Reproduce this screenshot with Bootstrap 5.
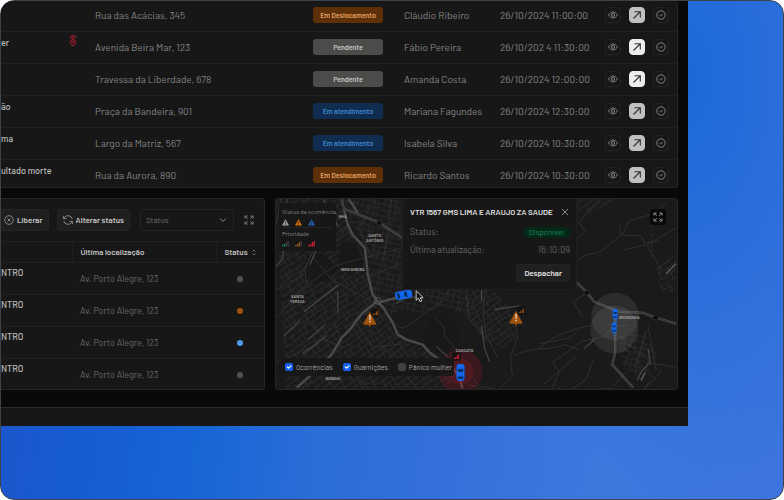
<!DOCTYPE html>
<html lang="pt-BR" data-bs-theme="dark">
<head>
<meta charset="utf-8">
<meta name="viewport" content="width=device-width, initial-scale=1">
<title>Central de ocorrências</title>
<link href="https://cdn.jsdelivr.net/npm/bootstrap@5.3.0/dist/css/bootstrap.min.css" rel="stylesheet">
<style>
:root{--panel:#171717;--line:#202020;--edge:#262626;--muted:#858585;--dim:#686868}
html{background:#fff}
body{background:#fff;min-height:100vh;font-family:Barlow,Roboto,"Liberation Sans",sans-serif;font-size:10px;line-height:16px;color:var(--muted)}
.stage{min-height:100vh;border:1px solid #3d434b;border-radius:14px;padding-right:95px;
background:radial-gradient(ellipse 230px 420px at 87% 15%,#1c68d9 0,#1c68d900 100%),linear-gradient(96deg,#1f54ca 0,#165bd1 14%,#1865d6 29%,#2a6dd7 43%,#326fd9 56%,#3d78dd 78%,#3b74dc 100%)}
.app{background:#090909;border-top-left-radius:13px}
.panel{background:var(--panel);border:1px solid var(--edge);border-left:0;border-radius:0 3px 3px 0}
.inset{margin-right:10px}
.calls{border-top:0}
.grid{width:100%;table-layout:fixed;border-collapse:collapse}
.grid td,.grid th{padding:0;vertical-align:top;white-space:nowrap}
.grid tr+tr td{border-top:1px solid var(--line)}
.calls td{height:32px;padding-top:7px}
.calls tr:first-child td{height:30px;padding-top:6px}
.calls tr:last-child td{height:28px}
.calls td.title{padding-top:3px;color:#bcbcbc;font-weight:500;font-size:9px}
.calls td.pin{padding-top:3px;padding-left:1px}
.tag{display:block;width:70px;height:16px;border-radius:3px;font-size:7px;font-weight:600;text-align:center}
.moving{background:#5e3007;color:#e5a468}
.waiting{background:#4c4c4b;color:#c4c4c4}
.serving{background:#0e2d50;color:#4285ce}
.act{width:16px;height:16px;padding:0;border:1px solid #242424;border-radius:4px;background:#171717;color:#8c8c8c;display:grid;place-items:center}
.act.go{background:#bfbfbf;border-color:#bfbfbf;color:#333}
.act.go.on{background:#ededed;border-color:#ededed}
svg{display:block;fill:none;stroke:currentColor}
.lower{margin-top:10px}
.left{flex:0 0 264px;min-width:0}
.tool{height:42px}
.tbtn{height:22px;padding:0 5px;background:#1f1f1f;border:1px solid #242424;border-radius:3px;color:#c8c8c8;font-size:8px;font-weight:600;line-height:16px;white-space:nowrap;display:flex;align-items:center;gap:3px}
.tbtn svg{color:#888}
.first{padding-left:3px;border-left:0;border-radius:0 3px 3px 0;margin-right:8px}
.pick{width:94px;height:22px;margin-left:10px;padding:0 20px 0 5px;font-size:8px;line-height:16px;color:#707070;background-color:#171717;border:1px solid #242424;border-radius:3px;background-image:url("data:image/svg+xml,%3Csvg xmlns='http://www.w3.org/2000/svg' viewBox='0 0 8 8'%3E%3Cpath d='M1 2.5 4 5.5 7 2.5' fill='none' stroke='%23888'/%3E%3C/svg%3E");background-size:8px;background-position:right 6px center}
.plain{border:0;background:none;padding:0;color:#858585}
.wide{margin-right:10px}
.units{font-size:9px;color:var(--dim)}
.units th{height:20px;font-size:8px;line-height:20px;color:#c2c2c2;font-weight:600;border-top:1px solid var(--line);border-left:1px solid var(--line);padding-left:8px}
.units th:first-child{border-left:0}
.units td{height:32px;padding:8px 8px 0;border-top:1px solid var(--line)}
.units td.title{padding:2px 0 0;color:#bcbcbc;font-weight:500}
.units tr:last-child td{height:30px}
.dot{display:block;width:6px;height:6px;border-radius:50%;margin:5px 0 0 13px;background:#555}
.dot.warn{background:#9f540e}.dot.info{background:#4e9ced}
.map{border-left:1px solid var(--edge);border-radius:3px;background:#1a1a1a;min-width:0}
.city{position:absolute;inset:0;width:100%;height:100%}
.city text{font-family:Roboto,"Liberation Sans",sans-serif;font-size:4px;font-weight:700;fill:#9a9a9a;stroke:none;text-anchor:middle}
.over{position:absolute}
.legend{left:3px;top:4px;width:57px;background:#171717;border-radius:3px;font-size:6px;line-height:11px;padding:3px;white-space:nowrap}
.legend .marks{height:9px;gap:6px;align-items:center}
.legend .cut{border-bottom:1px solid #252525;height:11px}
.filters{left:3px;bottom:13px;height:18px;padding:0 2px 0 6px;background:#171717e8;border-radius:3px;gap:10px;font-size:7px;line-height:16px;color:#a8a8a8}
.filters>span{gap:3px}
.filters label{white-space:nowrap}
.filters .form-check-input{width:8px;height:8px;margin:0;border-radius:2px;background-color:#414141;border:0}
.filters .form-check-input:checked{background-color:#155ff0}
.popup{left:126px;top:0;width:175px;background:#171717;border:1px solid #202020;border-top:0;border-radius:0 0 3px 3px;padding:5px 6px 7px 7px;font-size:9px;color:var(--dim)}
.popup h2{font-size:8px;line-height:16px;font-weight:600;color:#e2e2e2;margin:0;white-space:nowrap}
.when{margin:2px 0 6px}
.live{background:#062818;color:#17885a;font-size:8px;line-height:11px;padding:0 6px;border-radius:5px}
.send{background:#202020;border:1px solid #232323;border-radius:3px;color:#e0e0e0;font-size:8px;font-weight:600;line-height:16px;padding:0 7px}
.expand{right:11px;top:10px;width:16px;height:16px;padding:0;background:#090909;border:0;border-radius:3px;color:#999;display:grid;place-items:center}
.foot{height:19px;background:#171717;border-top:1px solid #2b2b2b;margin-top:17px}
</style>
<script src="https://cdn.jsdelivr.net/npm/bootstrap@5.3.0/dist/js/bootstrap.bundle.min.js"></script>
</head>
<body>
<svg width="0" height="0" class="position-absolute" aria-hidden="true">
<defs>
<symbol id="eye" viewBox="0 0 10 10"><path d="M.5 5C2 2.800 3.400 2 5 2s3 .8 4.500 3C8 7.200 6.600 8 5 8S2 7.200.5 5Z" stroke-width=".9"/><circle cx="5" cy="5" r="1.500" stroke-width=".9"/></symbol>
<symbol id="arrow" viewBox="0 0 10 10"><path d="M1.500 8.500 8 2M2.500 1.800h5.800v5.800" stroke-width="1.100"/></symbol>
<symbol id="check" viewBox="0 0 10 10"><circle cx="5" cy="5" r="4.200" stroke-width=".9"/><path d="m3.600 5.200 1 1 1.900-2.200" stroke-width=".9"/></symbol>
<symbol id="full" viewBox="0 0 10 10"><path d="M1 3.600V1h2.600M1 1l2.800 2.800M6.400 1H9v2.600M9 1 6.200 3.800M9 6.400V9H6.400M9 9 6.200 6.200M3.600 9H1V6.400M1 9l2.800-2.800" stroke-width=".9"/></symbol>
<symbol id="tri" viewBox="0 0 8 8"><path d="M4 .8 7.500 7h-7Z" fill="currentColor" stroke-linejoin="round" stroke-width=".8"/><path d="M4 3v2M4 5.700v.7" stroke="#171717" stroke-width=".8"/></symbol>
<symbol id="bars" viewBox="0 0 8 8"><path d="M1 7.500V5.500M3 7.500v-3M5 7.500v-5M7 7.500V1" stroke-width="1.300"/></symbol>
<symbol id="car" viewBox="0 0 10 18"><rect x="1" y=".5" width="8" height="17" rx="2.500" fill="#1266ed" stroke="none"/><path d="M2 5.500h6l-1 3H3ZM2.500 13h5l.5 2.500H2Z" fill="#06305f" stroke="none"/><path d="M.5 4v2M9.500 4v2M.5 12v2M9.500 12v2" stroke="#0d4aa8"/></symbol>
<pattern id="blocks" width="25" height="22" patternUnits="userSpaceOnUse" patternTransform="rotate(-34)"><path d="M0 3 25 1M0 8l13-1 12 2M0 14h25M0 19l14-1 11 2M4 0v14M9 8v14M14 0v18M20 0l-1 9M21 14v8" stroke="#2d2d2d" stroke-width=".9"/></pattern>
<pattern id="blocks2" width="21" height="24" patternUnits="userSpaceOnUse" patternTransform="rotate(14)"><path d="M0 4 21 3M0 9h12l9 1M0 16l21-2M0 21h21M3 0v16M8 4v17M14 0l1 24M18 9v15" stroke="#2d2d2d" stroke-width=".8"/></pattern>
</defs></svg>

<div class="stage">
<div class="app overflow-hidden">
<section class="panel calls inset overflow-hidden">
<table class="grid" id="calls"><colgroup><col style="width:66px"><col style="width:28px"><col><col style="width:91px"><col style="width:96px"><col style="width:105px"><col style="width:72px"></colgroup><tbody></tbody></table>
</section>

<div class="d-flex lower inset">
<section class="panel left units overflow-hidden inset">
<div class="tool d-flex align-items-center">
<button class="tbtn first" type="button"><svg width="10" height="10" viewBox="0 0 10 10"><circle cx="5" cy="5" r="4.300"/><path d="m3.500 3.500 3 3m0-3-3 3"/></svg>Liberar</button>
<button class="tbtn" type="button"><svg width="10" height="10" viewBox="0 0 10 10"><path d="M9.300 4A4.400 4.400 0 0 0 1.600 2.300L.6 3.600M.6.8v2.800h2.800M.7 6a4.400 4.400 0 0 0 7.700 1.700l1-1.300M9.400 9.200V6.400H6.600"/></svg>Alterar status</button>
<select class="form-select pick" aria-label="Status"><option>Status</option></select>
<button class="plain wide ms-auto" type="button" aria-label="Expandir"><svg width="10" height="10"><use href="#full"/></svg></button>
</div>
<table class="grid" id="units"><colgroup><col style="width:71px"><col><col style="width:48px"></colgroup>
<thead><tr><th></th><th>Última localização</th><th><span class="d-flex align-items-center gap-1">Status<svg width="4" height="7" viewBox="0 0 4 7"><path d="M.5 2.500 2 1l1.500 1.500M.5 4.500 2 6l1.500-1.500" stroke="#777" stroke-width=".8"/></svg></span></th></tr></thead><tbody></tbody></table>
</section>

<section class="panel map flex-fill position-relative overflow-hidden">
<svg class="city" viewBox="276 199 402 190" preserveAspectRatio="xMidYMid slice" aria-label="Mapa">
<rect x="270" y="190" width="420" height="210" fill="#1a1a1a" stroke="none"/>
<g stroke="none">
<path d="M276 199h66l2 10 9 26 14 28 11 38-24 26-15 19-32 43h-21Z" fill="url(#blocks)"/>
<path d="M342 199h61v100l-28 2-10-53-21-39Z" fill="url(#blocks2)"/>
<path d="m378 303 15 18 10 17 24 8 26 27-3 16H297l38-40 19-26Z" fill="url(#blocks)"/>
<path d="M384 300c20-8 45-12 78-9l14 11-9 15-25-10-20 6-18-3-20 8Z" fill="url(#blocks2)"/>
<path d="M465 290h28l17 16 7 30-12 12-20-7-18-24Z" fill="url(#blocks)"/>
<path d="M577 199h38c-8 12-18 6-23 15l-8-5-7 6Z" fill="url(#blocks)"/>
<path d="m657 268 20-13v38l-15-2Z" fill="url(#blocks)"/>
<path d="m617 338 28-7 13 26-16 25-19-18Z" fill="url(#blocks2)"/>
<path d="m308 253 15 1 15 14-8 11-16 6-11-11ZM430 322l13-8 17 10-2 21-19 8-15-11ZM341 241l15 3 8 19-12 14-14-12Z" fill="#181818"/>
</g>
<g stroke="#303030" stroke-width="1">
<path d="m276 318 28-31 31-21 30-8M276 290l24-13 13-25 23-11 16-20M276 363l39-17 24-26M281 199l-5 25m33 28 22 27 38 21M311 254l-6 17 2 16M375 199l-16 29 13 30M392 199l-8 60m-20-1 39-10M370 276l31-12m-97 51 19 24 20 9m13-25 18 25 29-4m-64 13 33 36m-62-26 27 23m33-60 47 59"/>
<path d="M449 290c-5 18-21 17-34 32-10 4-10 11-19 2m39-5c8 3 11 11 10 17l16 20m5-66 4 30 18 21m-1-51c-6 16-2 33-1 43l12 25m18-37 2 17-7 20 2 19-18 17-25-9m-4-14 15 16 14 2m20-33c18-10 33-4 51-11l13 5"/>
<path d="M579 260c11-10 19-3 28-13l14-11v-13m0 12 21 1 4 9-21 5m21-7 14-2m-37-6 7-14 24-7 13-11m-5 67-14-25 29-17M577 240l9-8-6-9 7-10 10-8"/>
<path d="M653 209v50" stroke-dasharray="3 2"/>
<path d="m540 349 12-10 25-10 15-3m-39 63 7-17-7-9 29-21 22-5 12-11h12m-70 62 10 4 18-11 8-20m55-35 8 45m-31 2-14 16-17 1-10 12m44-1 16-11 18-19m-40-31 31 24 31 5m-34 13-18 22m-49-86-10-16 16-11m-64-9 22-4m-7 66 31-6 8-9M577 357l-33 28M648 330l-13 39M619 342l38 39"/>
</g>
<g stroke="#484848" stroke-width="1.200"><path d="m287 199-2 23-2 36-7 9M323 199l7 11 8 16M326 240l-10 11-6 14M396 304l8-5 19-3M482 290v11m0 25 3 22 5 14M495 310l25-4M437 347l11 10M304 312l35-27M284 336l16-15M303 354l24-18M308 340l17-15M338 291v22M585 349l10-9M638 381l5-10 8-8-2-14"/></g>
<path d="m642 381 4-8M667 274l10-10" stroke="#5a5a5a" stroke-width="1.500"/>
<g stroke="#4a4a4a" stroke-width="2.400" stroke-linejoin="round"><path d="m342 199 2 10 16 6 20 8 23 15M349 199l9 14M344 209l4 16 5 10 12 13 2 17 1 10 5 20 5 6-15 12-8 10-5 7-8 8-9 15-10 12-26 23M378 303l19-5M378 303l5 4 10 16 5 12 9 5 16 5 7 8 10 7 15 10 6 12 2 7M577 282l11 11 7 9 12 5 13 5 23 1 14 5 20 6M616 310v43l-3 12 21 23"/></g>
<path d="m342 199 2 10 16 6 20 8 23 15M577 282l11 11 7 9 12 5 13 5 23 1 14 5 20 6M616 310v43l-3 12 21 23" stroke="#292929" stroke-width=".7"/>
<circle cx="378" cy="301" r="3.500" stroke="#555"/>
<g fill="#aaa" fill-opacity=".13" stroke="none"><circle cx="615" cy="330" r="24"/><circle cx="616" cy="317" r="24"/></g>
<g fill="#a71728" fill-opacity=".22" stroke="none"><circle cx="461" cy="372" r="22"/><circle cx="461" cy="372" r="13"/></g>
<g fill="#0c0c0c" stroke="#555" stroke-width=".3"><rect x="377" y="221" width="5" height="4" rx="1"/><rect x="585" y="291" width="5" height="4" rx="1"/><rect x="654" y="316" width="5" height="4" rx="1"/></g>
<g><text x="343" y="218">NHA</text><text x="375" y="237">SANTO</text><text x="375" y="242">ANTÔNIO</text><text x="353" y="271">MEDIANEIRA</text><text x="297.500" y="298">SANTA</text><text x="297.500" y="303">TEREZA</text><text x="333" y="380">NONOAI</text><text x="465" y="352">CASCATA</text><text x="630" y="319">GRONOMIA</text></g>
<rect x="453" y="353" width="8" height="8" rx="1" fill="#111" stroke="none"/><use href="#bars" x="454" y="354" width="6" height="6" stroke="#f01f38"/>
<g transform="rotate(78 404 295)"><use href="#car" x="399" y="286" width="10" height="18"/></g>
<use href="#car" x="456" y="364" width="10" height="18"/>
<use href="#car" x="613" y="309" width="6" height="11"/><use href="#car" x="612" y="322" width="6" height="12"/><path d="M617 319v4M615 334v3" stroke="#1266ed"/>
<g stroke="none"><rect x="371" y="309" width="8" height="8" rx="1" fill="#111"/><path d="m370 312 6.500 12q.5 1-1 1h-4.500l-1 3-1-3h-4.500q-1.500 0-1-1Z" fill="#a0520c"/><path d="M369.500 315h1.400v5h-1.400ZM369.500 321h1.400v1.500h-1.400Z" fill="#e5d0bb"/><rect x="518" y="307" width="8" height="8" rx="1" fill="#111"/><path d="m516.500 311 6.500 12q.5 1-1 1h-4.500l-1 3-1-3h-4.500q-1.500 0-1-1Z" fill="#a0520c"/><path d="M516 314h1.400v5H516ZM516 320h1.400v1.500H516Z" fill="#e5d0bb"/></g>
<use href="#bars" x="373" y="310" width="6" height="6" stroke="#a0520c"/><use href="#bars" x="519" y="308" width="6" height="6" stroke="#a0520c"/>
<path d="M416.500 291v9.500l2.200-2 1.800 3.500 1.700-.8-1.600-3.200h3Z" fill="#111" stroke="#eee" stroke-width=".8"/>
</svg>
<div class="over legend">
<div>Status da ocorrência</div>
<div class="marks d-flex cut"><svg width="7" height="7" color="#999"><use href="#tri"/></svg><svg width="7" height="7" color="#c7690c"><use href="#tri"/></svg><svg width="7" height="7" color="#1e5ca8"><use href="#tri"/></svg></div>
<div>Prioridade</div>
<div class="marks d-flex"><svg width="7" height="7" viewBox="0 0 8 8" stroke-width="1.300"><path d="M1 7.500V5.500M3 7.500v-3" stroke="#129a62"/><path d="M5 7.500v-5M7 7.500V1" stroke="#444"/></svg><svg width="7" height="7" viewBox="0 0 8 8" stroke-width="1.300"><path d="M1 7.500V5.500M3 7.500v-3M5 7.500v-5" stroke="#a45f16"/><path d="M7 7.500V1" stroke="#444"/></svg><svg width="7" height="7" color="#e01d38"><use href="#bars"/></svg></div>
</div>
<div class="over popup">
<div class="d-flex justify-content-between align-items-center"><h2>VTR 1567 GMS LIMA E ARAUJO ZA SAUDE</h2><button class="plain" type="button" aria-label="Fechar"><svg width="10" height="10" viewBox="0 0 10 10"><path d="m2 2 6 6m0-6L2 8"/></svg></button></div>
<div class="d-flex justify-content-between align-items-center mt-1"><span>Status:</span><span class="live">Disponível</span></div>
<div class="d-flex justify-content-between when"><span>Última atualização:</span><span>16:10:09</span></div>
<div class="text-end"><button class="send" type="button">Despachar</button></div>
</div>
<button class="over expand" type="button" aria-label="Tela cheia"><svg width="10" height="10"><use href="#full"/></svg></button>
<div class="over filters d-flex align-items-center">
<span class="d-flex align-items-center"><input class="form-check-input" type="checkbox" id="f1" checked><label for="f1">Ocorrências</label></span>
<span class="d-flex align-items-center"><input class="form-check-input" type="checkbox" id="f2" checked><label for="f2">Guarnições</label></span>
<span class="d-flex align-items-center"><input class="form-check-input" type="checkbox" id="f3"><label for="f3">Pânico mulher</label></span>
</div>
</section>
</div>
<footer class="foot"></footer>
</div>
</div>
<script>
const kinds={m:['moving','Em Deslocamento'],w:['waiting','Pendente'],s:['serving','Em atendimento']};
const rows=[['','Rua das Acácias, 345','m','Cláudio Ribeiro','26/10/2024 11:00:00',0],['er','Avenida Beira Mar, 123','w','Fábio Pereira','26/10/202 4 11:30:00',1],['','Travessa da Liberdade, 678','w','Amanda Costa','26/10/2024 12:00:00',1],['ão','Praça da Bandeira, 901','s','Mariana Fagundes','26/10/2024 12:30:00',0],['ma','Largo da Matriz, 567','s','Isabela Silva','26/10/2024 10:30:00',0],['ultado morte','Rua da Aurora, 890','m','Ricardo Santos','26/10/2024 10:30:00',0]];
const pin='<svg width="10" height="12" viewBox="0 0 10 12" color="#c41e33"><path d="M1.500 2.200C3 .4 7 .4 8.500 2.200M3 3.600c1-1 3-1 4 0M5 11C3 9.300 2.400 8.400 2.400 7.300a2.600 2.600 0 0 1 5.200 0C7.600 8.400 7 9.300 5 11Z"/><circle cx="5" cy="7.300" r=".6"/></svg>';
const btn=(id,c,l)=>`<button class="act ${c}" type="button" aria-label="${l}"><svg width="10" height="10"><use href="#${id}"/></svg></button>`;
document.querySelector('#calls tbody').innerHTML=rows.map((r,i)=>`<tr><td class="title">${r[0]}</td><td class="pin">${i==1?pin:''}</td><td>${r[1]}</td><td><span class="tag ${kinds[r[2]][0]}">${kinds[r[2]][1]}</span></td><td>${r[3]}</td><td>${r[4]}</td><td><div class="d-flex gap-2">${btn('eye','','Ver')}${btn('arrow','go'+(r[5]?' on':''),'Encaminhar')}${btn('check','','Concluir')}</div></td></tr>`).join('');
document.querySelector('#units tbody').innerHTML=['','warn','info',''].map(s=>`<tr><td class="title">NTRO</td><td>Av. Porto Alegre, 123</td><td><span class="dot ${s}"></span></td></tr>`).join('');
</script>
</body>
</html>
